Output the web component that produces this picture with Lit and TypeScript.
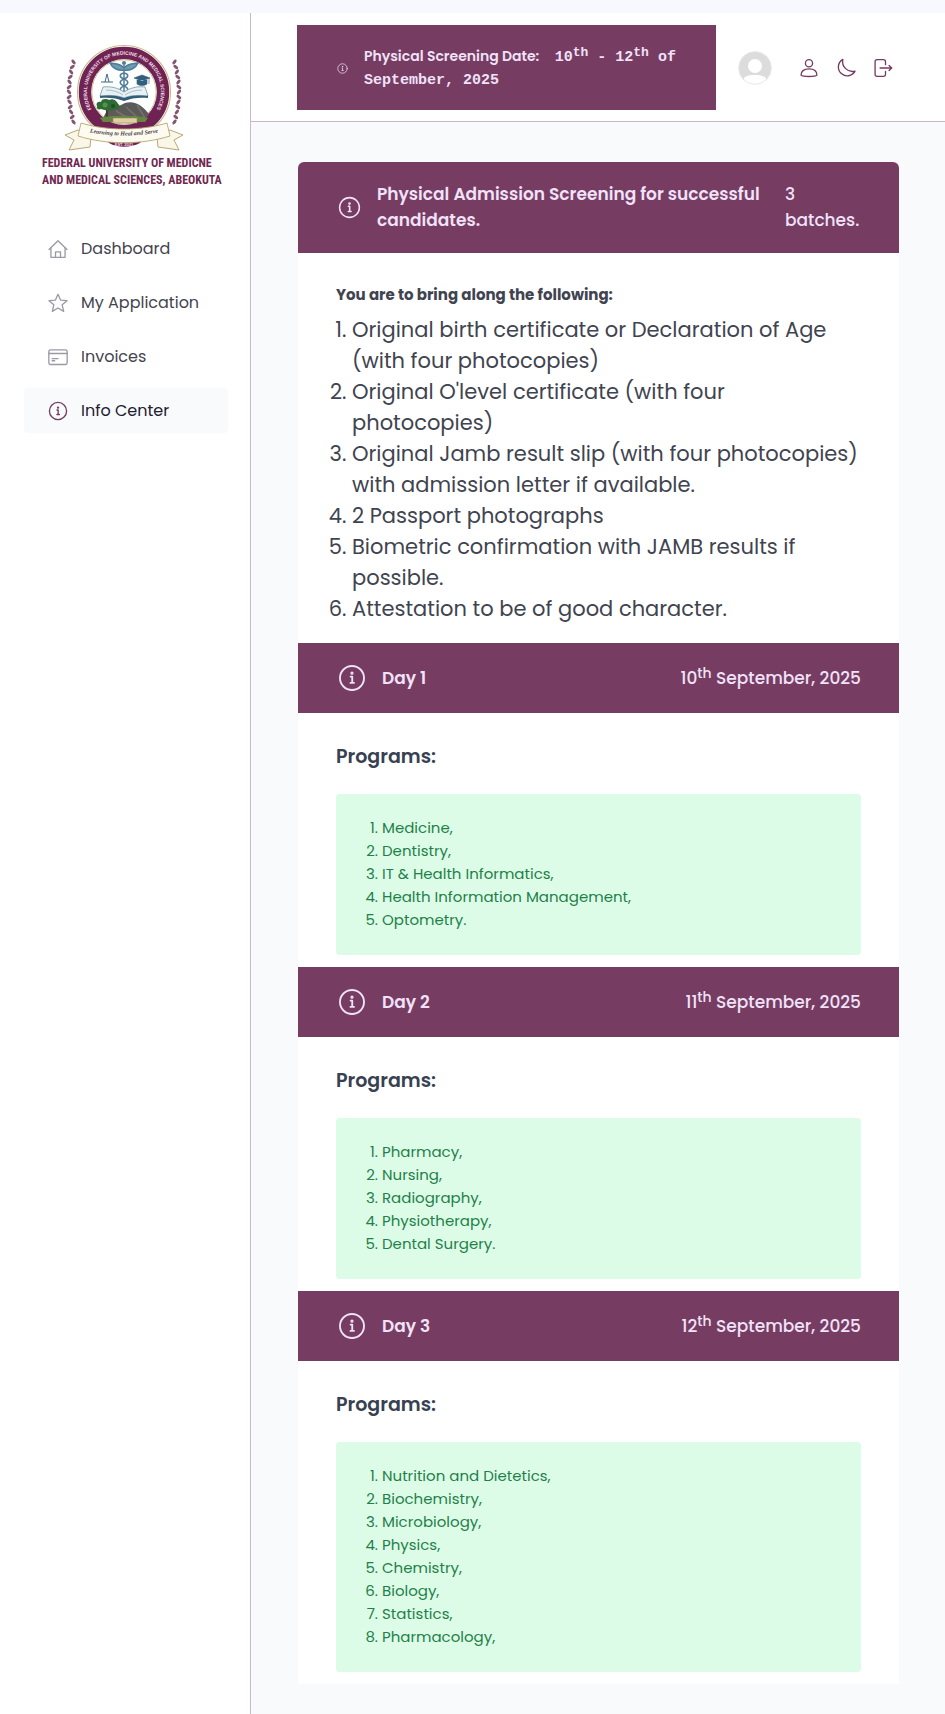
import { LitElement, html, svg, css } from "lit";
import { customElement, property, state } from "lit/decorators.js";
import { classMap } from "lit/directives/class-map.js";

type IconName = "home" | "star" | "card" | "info" | "user" | "moon" | "logout";

const ICONS: Record<IconName, unknown> = {
  home: svg`<path d="M1.200 12.500 12 2l10.800 10.500"/><path d="M3.500 10.500V22h17V10.500"/><path d="M9 22v-6.500h6V22"/>`,
  star: svg`<path d="m12 1.500 3.100 7 7.700.7-5.800 5 1.800 7.800-6.800-4-6.800 4 1.800-7.800-5.800-5 7.700-.7z"/>`,
  card: svg`<rect x="1" y="3.500" width="22" height="17.500" rx="2"/><path d="M1 7.800h22M5 14h7M5 16.500h3"/>`,
  info: svg`<circle cx="12" cy="12" r="10.300"/><path d="M10.800 10.800H12.200V16M10.700 16.200h3"/><circle cx="12" cy="7.900" r=".6"/>`,
  user: svg`<circle cx="12" cy="6.300" r="4.300"/><path d="M2.500 20.500c0-5 4.200-7.500 9.500-7.500s9.500 2.500 9.500 7.500c-2 2.200-17 2.200-19 0z"/>`,
  moon: svg`<path d="M8.200 1.600a10.600 10.600 0 1 0 14.600 14.200A12 12 0 0 1 8.200 1.600z"/>`,
  logout: svg`<path d="M15 8V4.200A2.200 2.200 0 0 0 12.800 2H4.700A2.200 2.200 0 0 0 2.500 4.200v15.600A2.200 2.200 0 0 0 4.700 22h8.100a2.200 2.200 0 0 0 2.200-2.200V16"/><path d="M8.500 12h14M19.300 8.900l3.200 3.100-3.200 3.100"/>`,
};

@customElement("line-icon")
class LineIcon extends LitElement {
  static styles = css`
    :host { display: block; flex: none; }
    svg { display: block; width: 100%; height: 100%; fill: none; stroke: currentColor; stroke-width: 1.6; stroke-linejoin: round; stroke-linecap: round; }
  `;
  @property() name: IconName = "info";
  render() {
    return html`<svg viewBox="0 0 24 24" aria-hidden="true">${ICONS[this.name]}</svg>`;
  }
}

@customElement("university-crest")
class UniversityCrest extends LitElement {
  static styles = css`
    :host { display: block; }
    svg { display: block; width: 100%; }
    .ring { font: 700 5px "Liberation Sans", Arial, sans-serif; fill: #f3dfe9; }
    .motto { font: italic 700 6px "Liberation Serif", serif; fill: #4b4048; }
    .est { font: 700 4px "Liberation Sans", sans-serif; fill: #f3dfe9; }
  `;
  private leaves() {
    const out = [];
    for (let i = 0; i < 13; i++) {
      const y = 19 + i * 5;
      const bow = Math.cos(((i - 6) * 10 * Math.PI) / 180) * 9;
      for (const side of [-1, 1]) {
        const x = 60 + side * (46 + bow);
        out.push(svg`<ellipse cx=${x} cy=${y} rx="2.800" ry="1.500" fill="#84556f" transform=${`rotate(${side * (i % 2 ? 35 : -50)} ${x} ${y})`}/>`);
      }
    }
    return out;
  }
  render() {
    return html`<svg viewBox="0 0 120 112" role="img" aria-label="University crest">
      ${this.leaves()}
      <circle cx="60" cy="49" r="46.500" fill="#fff" stroke="#c9bd8e" stroke-width="1.200"/>
      <circle cx="60" cy="49" r="39" fill="none" stroke="#6f2352" stroke-width="12.500"/>
      <circle cx="60" cy="49" r="32.200" fill="#fdfefe" stroke="#cfc49a" stroke-width="1"/>
      <path id="arc" d="M33 74A37 37 0 1 1 87 74" fill="none"/>
      <text class="ring" text-anchor="middle"><textPath href="#arc" startOffset="50%">FEDERAL UNIVERSITY OF MEDICINE AND MEDICAL SCIENCES</textPath></text>
      <g fill="none" stroke="#4f7d99" stroke-width="1.500">
        <path d="M60 22v30"/><path d="M60 25c-4-5-10-4-14-5 2 5 8 8 14 7 6 1 12-2 14-7-4 1-10 0-14 5" fill="#6f9ab0"/>
        <path d="M60 50c-5-2-5-5 0-7s5-5 0-7-5-5 0-6M60 50c5-2 5-5 0-7s-5-5 0-7 5-5 0-6"/>
      </g>
      <circle cx="60" cy="20" r="2" fill="#4f7d99"/>
      <path d="M37 39h12M41 39l2-8 2 8" stroke="#45687d" fill="none"/>
      <path d="m70 35 8-3 8 3-8 3zM73 37v4c3 2 7 2 10 0v-4M85 35v6" fill="#315e7c" stroke="#315e7c" stroke-width=".6"/>
      <path d="M39 44c8-1 15 1 21 5 6-4 13-6 21-5l3 9c-8-1-17-1-24 2-7-3-16-3-24-2z" fill="#e8f1f4" stroke="#6f96a8" stroke-width=".8"/>
      <path d="M42 47c7 0 13 2 17 5M78 47c-7 0-13 2-17 5" fill="none" stroke="#a9c0c9"/>
      <path d="M36 53c8-1 17-1 24 2 7-3 16-3 24-2v2c-8-1-17 0-24 3-7-3-16-4-24-3z" fill="#345e78"/>
      <path d="M39 76c3-9 7-12 14-12l8-4c10-3 18 3 24 11l-4 6H41z" fill="#5d5b5a"/>
      <path d="M62 64l12 11M73 62l8 13M52 68l14 8" stroke="#77716d" stroke-width="1.500"/>
      <path d="M42 65h2v10h-2z" fill="#4d3a29"/>
      <path d="M33 63c-2-4 3-5 4-4 1-4 6-3 8-2 4-2 8 1 9 4 3 1 2 6-2 5-5 3-12 1-15 0-2 1-5 0-4-3z" fill="#2f6b35"/>
      <circle cx="41" cy="62" r="2.500" fill="#559446"/><circle cx="49" cy="63" r="2" fill="#1f4e2a"/>
      <path d="M36 75c8-3 38-3 48 0l-3 4H39z" fill="#658541"/>
      <rect x="49" y="75" width="24" height="5" fill="#ddd1a4" stroke="#988755" stroke-width=".6"/>
      <path d="M14 87 1 92l9 5-5 10 21-3 1-10zM106 87l13 5-9 5 5 10-21-3-1-10z" fill="#fbf7e8" stroke="#af9e67" stroke-width=".9"/>
      <path d="M40 91c12 5 30 5 42 0l-6 9c-10 5-22 5-31 0z" fill="#6f2352"/>
      <path d="M17 80c26 8 60 8 86 0l3 13c-29 9-63 9-92 0z" fill="#fdfaf0" stroke="#b5a671" stroke-width=".9"/>
      <path id="mottoArc" d="M18 88q42 9 84 0" fill="none"/>
      <text class="motto" text-anchor="middle"><textPath href="#mottoArc" startOffset="50%">Learning to Heal and Serve</textPath></text>
      <text class="est" x="60" y="103" text-anchor="middle">EST. 2021</text>
    </svg>`;
  }
}

@customElement("side-nav")
class SideNav extends LitElement {
  static styles = css`
    :host { display: block; background: #fff; border-right: 1px solid #cdb7c6; box-sizing: border-box; padding: 30px 22px 0 24px; }
    .brand { display: block; text-decoration: none; color: #702850; padding: 0 0 0 18px; }
    university-crest { width: 120px; margin-left: 22px; }
    .name { margin: 0; white-space: nowrap; font: 700 12px/17px "Roboto Condensed", "Liberation Sans Narrow", sans-serif; }
    .menu { list-style: none; margin: 37px 0 0; padding: 0; display: grid; gap: 9px; }
    .link { display: flex; align-items: center; gap: 13px; height: 45px; padding-left: 24px; border-radius: 4px; color: #44444f; text-decoration: none; font-size: 16px; }
    .link line-icon { width: 20px; height: 20px; color: #9a9aa6; }
    .active { background: #f8fafc; color: #1f2030; }
    .active line-icon { color: #763c62; }
  `;
  @state() private current = "Info Center";
  private items: { label: string; icon: IconName }[] = [
    { label: "Dashboard", icon: "home" },
    { label: "My Application", icon: "star" },
    { label: "Invoices", icon: "card" },
    { label: "Info Center", icon: "info" },
  ];
  render() {
    return html`
      <a class="brand" href="#home">
        <university-crest></university-crest>
        <p class="name">FEDERAL UNIVERSITY OF MEDICNE<br />AND MEDICAL SCIENCES, ABEOKUTA</p>
      </a>
      <nav aria-label="Main">
        <ul class="menu">
          ${this.items.map(
            (i) => html`<li><a href="#" class=${classMap({ link: true, active: i.label === this.current })}
              @click=${(e: Event) => { e.preventDefault(); this.current = i.label; }}>
              <line-icon name=${i.icon}></line-icon>${i.label}</a></li>`
          )}
        </ul>
      </nav>`;
  }
}

@customElement("top-bar")
class TopBar extends LitElement {
  static styles = css`
    :host { display: flex; align-items: center; background: #fff; border-bottom: 1px solid #cdb7c6; padding: 12px 52px 11px 46px; }
    .notice { flex: 1; display: flex; align-items: center; gap: 16px; background: #763c62; color: #f0e2f8; padding: 20px 30px 19px 40px; }
    .notice line-icon { width: 11px; height: 11px; }
    .text { margin: 0; font-size: 14px; font-weight: 600; line-height: 23px; }
    .date { font-family: "Liberation Mono", monospace; font-size: 15px; font-weight: 700; line-height: 18px; margin-left: 12px; }
    sup { font-size: 13px; line-height: 0; vertical-align: 5px; }
    .avatar { width: 34px; height: 34px; margin: 0 27px 0 22px; }
    .avatar svg { display: block; }
    .tools { display: flex; gap: 17px; }
    button { border: 0; background: none; padding: 0; color: #763c62; cursor: pointer; }
    button line-icon { width: 20px; height: 20px; }
  `;
  render() {
    return html`
      <div class="notice">
        <line-icon name="info"></line-icon>
        <p class="text">Physical Screening Date: <span class="date">10<sup>th</sup> - 12<sup>th</sup> of September, 2025</span></p>
      </div>
      <div class="avatar"><svg viewBox="0 0 34 34" role="img" aria-label="Profile picture">
        <defs><clipPath id="c"><circle cx="17" cy="17" r="16.500"/></clipPath></defs>
        <g clip-path="url(#c)"><rect width="34" height="34" fill="#dcdcdc"/><circle cx="17" cy="15" r="7" fill="#fff"/><path d="M6 34V27c3-3 7-3 11-3s8 0 11 3v7z" fill="#fff"/></g>
        <circle cx="17" cy="17" r="16.200" fill="none" stroke="#e6e6e6" stroke-width=".8"/>
      </svg></div>
      <div class="tools">
        <button aria-label="Profile"><line-icon name="user"></line-icon></button>
        <button aria-label="Dark mode"><line-icon name="moon"></line-icon></button>
        <button aria-label="Log out"><line-icon name="logout"></line-icon></button>
      </div>`;
  }
}

@customElement("day-section")
class DaySection extends LitElement {
  static styles = css`
    :host { display: block; }
    .bar { display: flex; align-items: center; gap: 16px; box-sizing: border-box; min-height: 70px; padding: 0 38px 0 40px; background: #763c62; color: #f0e2f8; }
    .bar line-icon { width: 28px; height: 28px; }
    .title { margin: 0; flex: 1; font-size: 17px; font-weight: 600; }
    .date { margin: 0; font-size: 17px; font-weight: 500; }
    sup { font-size: 14px; line-height: 0; vertical-align: 6px; }
    .body { padding: 30px 38px 12px; }
    .heading { margin: 0 0 23px; font-size: 19px; line-height: 28px; font-weight: 600; color: #374151; }
    .list { margin: 0; padding: 22px 23px 24px 46px; background: #dcfce7; color: #1f8049; border-radius: 4px; font-size: 15px; line-height: 23px; }
  `;
  @property({ type: Number }) day = 1;
  @property() date = "";
  @property({ attribute: false }) programs: string[] = [];
  render() {
    return html`
      <header class="bar">
        <line-icon name="info"></line-icon>
        <h2 class="title">Day ${this.day}</h2>
        <p class="date">${this.date}<sup>th</sup> September, 2025</p>
      </header>
      <div class="body">
        <h3 class="heading">Programs:</h3>
        <ol class="list">${this.programs.map((p) => html`<li>${p}</li>`)}</ol>
      </div>`;
  }
}

@customElement("app-root")
class AppRoot extends LitElement {
  static styles = css`
    :host { display: grid; grid-template-columns: 251px minmax(0, 1fr); box-sizing: border-box; min-height: 100vh; padding-top: 13px; background: #f8f8ff; font-family: Poppins, Inter, sans-serif; color: #3f4450; }
    .page { background: #f8fafc; }
    main { padding: 40px 46px 31px 47px; }
    .card { background: #fff; border-radius: 6px 6px 0 0; overflow: hidden; }
    .bar { display: flex; align-items: center; gap: 16px; padding: 19px 38px 20px 40px; background: #763c62; color: #f0e2f8; }
    .bar line-icon { width: 23px; height: 23px; }
    .title { margin: 0; flex: 1; font-size: 17px; line-height: 26px; font-weight: 600; }
    .batches { margin: 0; width: 76px; font-size: 17px; line-height: 26px; font-weight: 500; }
    .intro { padding: 30px 38px 19px; }
    .lead { margin: 0 0 8px; font-size: 15px; line-height: 23px; font-weight: 700; }
    .needs { margin: 0; padding: 0 0 0 16px; font-size: 21px; line-height: 31px; }
  `;
  private needs = [
    "Original birth certificate or Declaration of Age (with four photocopies)",
    "Original O'level certificate (with four photocopies)",
    "Original Jamb result slip (with four photocopies) with admission letter if available.",
    "2 Passport photographs",
    "Biometric confirmation with JAMB results if possible.",
    "Attestation to be of good character.",
  ];
  private days = [
    { date: "10", programs: ["Medicine,", "Dentistry,", "IT & Health Informatics,", "Health Information Management,", "Optometry."] },
    { date: "11", programs: ["Pharmacy,", "Nursing,", "Radiography,", "Physiotherapy,", "Dental Surgery."] },
    { date: "12", programs: ["Nutrition and Dietetics,", "Biochemistry,", "Microbiology,", "Physics,", "Chemistry,", "Biology,", "Statistics,", "Pharmacology,"] },
  ];
  render() {
    return html`
      <side-nav></side-nav>
      <div class="page">
        <top-bar></top-bar>
        <main>
          <article class="card">
            <header class="bar">
              <line-icon name="info"></line-icon>
              <h1 class="title">Physical Admission Screening for successful candidates.</h1>
              <p class="batches">3 batches.</p>
            </header>
            <section class="intro">
              <p class="lead">You are to bring along the following:</p>
              <ol class="needs">${this.needs.map((n) => html`<li>${n}</li>`)}</ol>
            </section>
            ${this.days.map((d, i) => html`<day-section .day=${i + 1} .date=${d.date} .programs=${d.programs}></day-section>`)}
          </article>
        </main>
      </div>`;
  }
}
